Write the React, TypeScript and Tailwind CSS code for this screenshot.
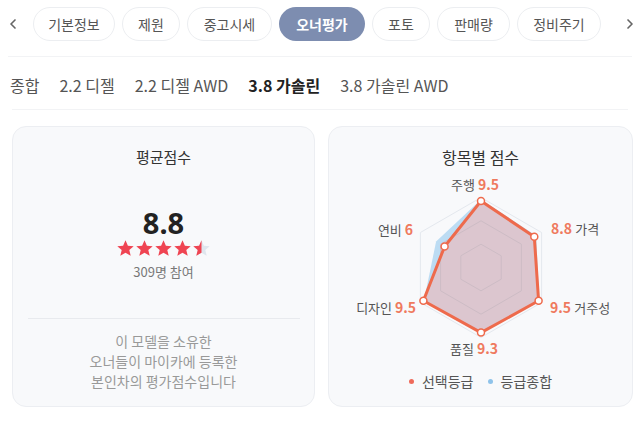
import { ChevronLeft, ChevronRight } from "lucide-react";

const tabs = [
  { label: "기본정보", w: "w-[82px]" },
  { label: "제원", w: "w-[58px]" },
  { label: "중고시세", w: "w-[85px]" },
  { label: "오너평가", w: "w-[86px]", active: true },
  { label: "포토", w: "w-[58px]" },
  { label: "판매량", w: "w-[73px]" },
  { label: "정비주기", w: "w-[84px]" },
];

const trims = ["종합", "2.2 디젤", "2.2 디젤 AWD", "3.8 가솔린", "3.8 가솔린 AWD"];

// radar: order top, upper-right, lower-right, bottom, lower-left, upper-left
const CX = 152;
const CY = 99.5;
const R = 70;
const angles = [-90, -30, 30, 90, 150, 210];
const mine = [9.5, 8.8, 9.5, 9.3, 9.5, 6];
const avg = [9.7, 9.1, 9.6, 9.4, 9.4, 7.4];

function pts(vals: number[]) {
  return vals
    .map((v, i) => {
      const a = (angles[i] * Math.PI) / 180;
      const r = (v / 10) * R;
      return `${(CX + r * Math.cos(a)).toFixed(1)},${(CY + r * Math.sin(a)).toFixed(1)}`;
    })
    .join(" ");
}

function Star({ half }: { half?: boolean }) {
  const d = "M9.5 1.3l2.4 5.4 5.8.5-4.4 3.9 1.4 5.7-5.2-3-5.2 3 1.4-5.7-4.4-3.9 5.8-.5z";
  return (
    <svg width="19" height="19" viewBox="0 0 19 19">
      <defs>
        <clipPath id="halfclip">
          <rect x="0" y="0" width="9.5" height="19" />
        </clipPath>
      </defs>
      {half ? (
        <>
          <path d={d} fill="#dfe6ee" />
          <path d={d} fill="#ef4452" clipPath="url(#halfclip)" />
        </>
      ) : (
        <path d={d} fill="#ef4452" />
      )}
    </svg>
  );
}

function Radar() {
  const grid = [1, 2, 3].map((k) => pts(Array(6).fill((10 * k) / 3)));
  const label = "fill-[#555] text-[13px]";
  const val = "fill-[#ef7a5e] text-[14px] font-semibold";
  return (
    <svg width="303" height="200" viewBox="0 0 303 200">
      <polygon points={grid[2]} fill="none" stroke="#e4e8ee" strokeWidth="1" />
      <polygon points={pts(avg)} fill="#bcdcf3" stroke="none" />
      <polygon points={pts(mine)} fill="#dcc6cf" stroke="none" />
      <polygon points={grid[0]} fill="none" stroke="#cdbcc5" strokeWidth="1" />
      <polygon points={grid[1]} fill="none" stroke="#cdbcc5" strokeWidth="1" />
      <polygon points={pts(mine)} fill="none" stroke="#ee6a4c" strokeWidth="3" strokeLinejoin="round" />
      {pts(mine)
        .split(" ")
        .map((p, i) => {
          const [x, y] = p.split(",");
          return <circle key={i} cx={x} cy={y} r="3.5" fill="#fff" stroke="#ee6a4c" strokeWidth="1.5" />;
        })}
      <text x="146" y="22" textAnchor="middle">
        <tspan className={label}>주행 </tspan>
        <tspan className={val}>9.5</tspan>
      </text>
      <text x="84" y="67" textAnchor="end">
        <tspan className={label}>연비 </tspan>
        <tspan className={val}>6</tspan>
      </text>
      <text x="222" y="66">
        <tspan className={val}>8.8 </tspan>
        <tspan className={label}>가격</tspan>
      </text>
      <text x="87" y="145" textAnchor="end">
        <tspan className={label}>디자인 </tspan>
        <tspan className={val}>9.5</tspan>
      </text>
      <text x="221" y="145">
        <tspan className={val}>9.5 </tspan>
        <tspan className={label}>거주성</tspan>
      </text>
      <text x="145" y="186" textAnchor="middle">
        <tspan className={label}>품질 </tspan>
        <tspan className={val}>9.3</tspan>
      </text>
    </svg>
  );
}

export default function App() {
  return (
    <div className="w-[640px] h-[427px] bg-white overflow-hidden font-['Noto_Sans_CJK_KR','Noto_Sans',sans-serif] text-[#444]">
      {/* tabs */}
      <div className="flex items-center h-[48px]">
        <ChevronLeft className="w-[16px] h-[16px] text-[#666] ml-[5px] mr-[12px]" strokeWidth={2.5} />
        <div className="flex gap-[7px]">
          {tabs.map((t) => (
            <div
              key={t.label}
              className={`${t.w} h-[34px] rounded-full flex items-center justify-center text-[14px] ${
                t.active ? "bg-[#7d8db0] text-white font-semibold" : "border border-[#eceef1] text-[#555]"
              }`}
            >
              {t.label}
            </div>
          ))}
        </div>
        <ChevronRight className="w-[16px] h-[16px] text-[#666] ml-[21px]" strokeWidth={2.5} />
      </div>
      <div className="mx-[8px] h-[1px] bg-[#f2f3f5] mt-[8px]" />

      {/* trims */}
      <div className="flex items-center h-[52px] pl-[10px] pt-[3px] gap-[20px] text-[16px] text-[#555]">
        {trims.map((t) => (
          <span key={t} className={t === "3.8 가솔린" ? "font-bold text-[#222]" : ""}>
            {t}
          </span>
        ))}
      </div>
      <div className="mx-[12px] h-[1px] bg-[#f2f3f5]" />

      {/* cards */}
      <div className="flex gap-[13px] pl-[12px] mt-[16px]">
        <div className="w-[303px] h-[281px] shrink-0 rounded-[14px] border border-[#eceef2] bg-[#f8f9fb] flex flex-col items-center">
          <div className="mt-[19px] text-[15px] leading-[22px] text-[#333]">평균점수</div>
          <div className="mt-[40px] text-[29px] leading-[30px] font-bold text-[#222] font-['Noto_Sans',sans-serif]">8.8</div>
          <div className="flex mt-[1px]">
            <Star />
            <Star />
            <Star />
            <Star />
            <Star half />
          </div>
          <div className="mt-[4px] text-[13px] leading-[20px] text-[#777]">309명 참여</div>
          <div className="w-[272px] h-[1px] bg-[#e8eaee] mt-[36px]" />
          <div className="mt-[12px] text-center text-[14px] leading-[20px] text-[#999]">
            이 모델을 소유한
            <br />
            오너들이 마이카에 등록한
            <br />
            본인차의 평가점수입니다
          </div>
        </div>

        <div className="w-[305px] h-[281px] shrink-0 rounded-[14px] border border-[#eceef2] bg-[#f8f9fb] flex flex-col items-center">
          <div className="mt-[19px] text-[16px] leading-[22px] text-[#333]">항목별 점수</div>
          <Radar />
          <div className="mt-[3px] flex items-center gap-[14px] text-[14px] leading-[20px] text-[#555]">
            <div className="flex items-center gap-[8px]">
              <span className="w-[5px] h-[5px] rounded-full bg-[#ef6a5a]" />
              선택등급
            </div>
            <div className="flex items-center gap-[8px]">
              <span className="w-[5px] h-[5px] rounded-full bg-[#8fc3ea]" />
              등급종합
            </div>
          </div>
        </div>
      </div>
    </div>
  );
}
